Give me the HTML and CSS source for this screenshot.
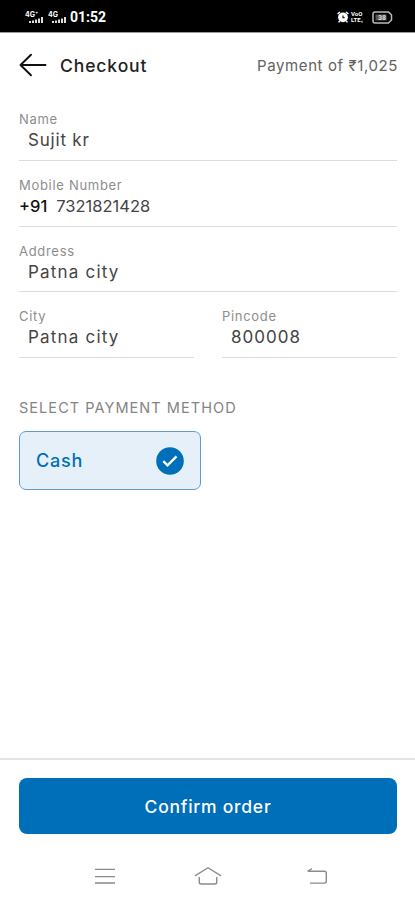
FILE: index.html
```html
<!DOCTYPE html>
<html lang="en">
<head>
  <meta charset="UTF-8">
  <meta name="viewport" content="width=device-width, initial-scale=1.0">
  <title>Checkout</title>
  <link rel="stylesheet" href="styles.css">
</head>
<body>
  <div class="status-bar">
    <div class="status-left">
      <div class="signal">
        <span class="signal-type">4G⁺</span>
        <svg width="14" height="6" viewBox="0 0 14 6" fill="#ddd"><path d="M0 4h2v2H0zM3 3.5h2V6H3zM6 2.5h2V6H6zM9 1.5h2V6H9zM12 0h2v6h-2z"/></svg>
      </div>
      <div class="signal">
        <span class="signal-type">4G</span>
        <svg width="14" height="6" viewBox="0 0 14 6" fill="#ddd"><path d="M0 4h2v2H0zM3 3.5h2V6H3zM6 2.5h2V6H6zM9 1.5h2V6H9zM12 0h2v6h-2z"/></svg>
      </div>
      <span class="clock">01:52</span>
    </div>
    <div class="status-right">
      <svg width="12" height="12" viewBox="0 0 12 12"><circle cx="6" cy="6.3" r="4.9" fill="#fff"/><path d="M.6 3 3 1M11.4 3 9 1M2.7 10 1.6 11.4M9.3 10l1.1 1.4" stroke="#fff" stroke-width="1.5"/><path d="M6 4.4v2.4h1.7" stroke="#000" stroke-width="1.1" fill="none"/></svg>
      <span class="volte"><span>VoO</span><span>LTE₁</span></span>
      <svg width="21" height="13" viewBox="0 0 21 13"><path d="M3 1h13.5l3 3v5l-3 3H3a2 2 0 0 1-2-2V3a2 2 0 0 1 2-2z" fill="none" stroke="#bbb" stroke-width="1.5"/><path d="M3.5 3.5h11v6h-11z" fill="#555"/><text x="10" y="9" text-anchor="middle" class="battery-text">38</text></svg>
    </div>
  </div>

  <header class="header">
    <svg width="28" height="24" viewBox="0 0 28 24" fill="none" stroke="#111" stroke-width="1.9" stroke-linecap="round" stroke-linejoin="round"><path d="M26.5 12h-25M12 1.7 1.5 12 12 22.3"/></svg>
    <h1 class="title">Checkout</h1>
    <span class="amount">Payment of ₹1,025</span>
  </header>

  <main class="content">
    <div class="field">
      <span class="label">Name</span>
      <span class="value">Sujit kr</span>
    </div>
    <div class="field">
      <span class="label">Mobile Number</span>
      <span class="value phone"><span class="code">+91</span><span>7321821428</span></span>
    </div>
    <div class="field">
      <span class="label">Address</span>
      <span class="value city">Patna city</span>
    </div>
    <div class="row">
      <div class="field">
        <span class="label">City</span>
        <span class="value city">Patna city</span>
      </div>
      <div class="field">
        <span class="label">Pincode</span>
        <span class="value pincode">800008</span>
      </div>
    </div>

    <h2 class="section-title">SELECT PAYMENT METHOD</h2>
    <div class="method">
      <span>Cash</span>
      <svg width="28" height="28" viewBox="0 0 28 28"><circle cx="14" cy="14" r="13.8" fill="#006fba"/><path d="m7.3 14.2 4.2 4.1 9-9" fill="none" stroke="#fff" stroke-width="2.4"/></svg>
    </div>
  </main>

  <footer class="footer">
    <button class="confirm">Confirm order</button>
  </footer>

  <nav class="nav">
    <svg width="20" height="18" viewBox="0 0 20 18" stroke="#8b8b8b" stroke-width="1.4"><path d="M0 2.4h20M0 9.6h20M0 16h20"/></svg>
    <svg class="home" width="28" height="20" viewBox="0 0 28 20" fill="none" stroke="#8b8b8b" stroke-width="1.4" stroke-linejoin="round"><path d="M1 9.8 13.5 2h1L27 9.8M5.3 11v5.2q0 1.8 1.8 1.8h13.8q1.8 0 1.8-1.8V11"/></svg>
    <svg width="22" height="18" viewBox="0 0 22 18" fill="none" stroke="#8b8b8b" stroke-width="1.4"><path d="M2 4.3h16.5q1.8 0 1.8 1.8v8.2q0 1.8-1.8 1.8H4M6 1.5 1.6 4.3"/></svg>
  </nav>
</body>
</html>
```

FILE: styles.css
```css
* { box-sizing: border-box; }
body { display: flex; flex-direction: column; height: 900px; margin: 0; background: #fff; color: #333; font-family: Inter, "Noto Sans", sans-serif; overflow: hidden; }

.status-bar { display: flex; justify-content: space-between; height: 33px; padding: 2px 22px 0 25px; background: #000; border-bottom: 1px solid #999; color: #fff; }
.status-left, .status-right { display: flex; align-items: center; }
.signal { display: flex; flex-direction: column; width: 23px; height: 12px; }
.signal svg { margin: -1px 0 0 4px; }
.signal-type { font-size: 7px; font-weight: 700; line-height: 7px; }
.clock { font-family: Roboto, sans-serif; font-size: 14px; font-weight: 700; margin-left: -1px; }
.volte { display: flex; flex-direction: column; width: 14px; margin: 0 7px 0 2px; font: 700 6px/6px Roboto, sans-serif; }
.battery-text { font: 700 7px Roboto, sans-serif; fill: #ddd; }

.header { display: flex; align-items: center; height: 62px; padding: 2px 17px 0 19px; }
.title { margin: 0 auto 0 13px; color: #222; font-size: 17.5px; font-weight: 500; letter-spacing: 0.9px; }
.amount { color: #626262; font-size: 15px; letter-spacing: 0.6px; }

.content { flex: 1; padding: 0 18px 0 19px; }
.field { height: 65.8px; padding-top: 16px; border-bottom: 1px solid #dcdcdc; }
.label { display: block; color: #8d8d8d; font-size: 13px; line-height: 16px; letter-spacing: 0.7px; }
.value { display: block; padding-left: 9px; color: #444; font-size: 17px; line-height: 26px; letter-spacing: 0.8px; }
.city { letter-spacing: 1.2px; }
.pincode { letter-spacing: 1px; }
.phone { display: flex; gap: 9px; padding-left: 0; font-size: 16.5px; letter-spacing: 0; }
.code { color: #111; font-weight: 500; }
.row { display: grid; grid-template-columns: 175px 1fr; gap: 28px; }

.section-title { margin: 39px 0 12px; color: #848484; font-size: 14.5px; font-weight: 400; line-height: 22px; letter-spacing: 1.05px; }
.method { display: flex; align-items: center; justify-content: space-between; width: 182px; height: 59px; padding: 0 16px; background: #e6f0f8; border: 1px solid #5c9dcc; border-radius: 7px; color: #006fba; font-size: 18px; font-weight: 500; letter-spacing: 0.8px; }

.footer { padding: 18px 18px 0 19px; border-top: 2px solid #e4e4e4; }
.confirm { display: block; width: 100%; height: 56px; padding: 0; border: none; border-radius: 8px; background: #006fba; color: #fff; font-family: inherit; font-size: 17.5px; font-weight: 500; letter-spacing: 0.75px; cursor: pointer; }
.nav { display: flex; align-items: center; justify-content: space-between; height: 66px; padding: 18px 87px 0 95px; }
.home { margin-right: 6px; }
```
